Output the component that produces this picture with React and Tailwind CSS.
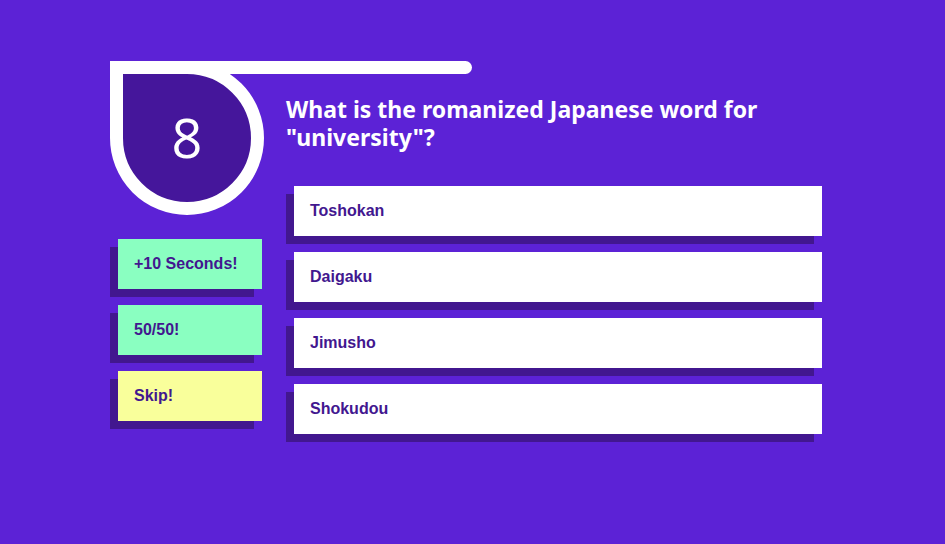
import React from 'react';

const powerUps = [
  { label: '+10 Seconds!', color: 'bg-[#8affc1]' },
  { label: '50/50!', color: 'bg-[#8affc1]' },
  { label: 'Skip!', color: 'bg-[#f9ff9b]' },
];

const answers = ['Toshokan', 'Daigaku', 'Jimusho', 'Shokudou'];

const App = () => {
  return (
    <div className="min-h-screen w-full bg-[#5c22d6] pt-[61px] pl-[110px]">
      <div className="flex gap-[22px]">
        {/* Timer + power-ups */}
        <div className="flex flex-col w-[154px]">
          <div className="relative w-[154px] h-[154px]">
            <div className="w-[154px] h-[154px] rounded-full rounded-tl-none border-[13px] border-white bg-[#45169b] flex items-center justify-center">
              <span className="text-white text-[54px] font-normal leading-none font-['Open_Sans',sans-serif] mt-[-2px]">8</span>
            </div>
            <div className="absolute top-0 left-0 w-[362px] h-[13px] bg-white rounded-r-full" />
          </div>

          <div className="mt-[24px] flex flex-col gap-[16px]">
            {powerUps.map((p) => (
              <div
                key={p.label}
                className={`ml-2 w-[144px] h-[50px] ${p.color} shadow-[-8px_8px_0_#42178f] flex items-center pl-4`}
              >
                <span className="text-[#42178f] text-base font-bold font-['Liberation_Sans',Arial,sans-serif]">
                  {p.label}
                </span>
              </div>
            ))}
          </div>
        </div>

        {/* Question + answers */}
        <div className="flex flex-col w-[536px]">
          <h1 className="mt-[34px] text-white text-[23px] leading-[28px] font-bold font-['Noto_Sans',sans-serif]">
            What is the romanized Japanese word for "university"?
          </h1>
          <div className="mt-[35px] flex flex-col gap-[16px]">
            {answers.map((a) => (
              <div
                key={a}
                className="ml-2 w-[528px] h-[50px] bg-white shadow-[-8px_8px_0_#42178f] flex items-center pl-4"
              >
                <span className="text-[#42178f] text-base font-bold font-['Liberation_Sans',Arial,sans-serif]">
                  {a}
                </span>
              </div>
            ))}
          </div>
        </div>
      </div>
    </div>
  );
};

export default App;
